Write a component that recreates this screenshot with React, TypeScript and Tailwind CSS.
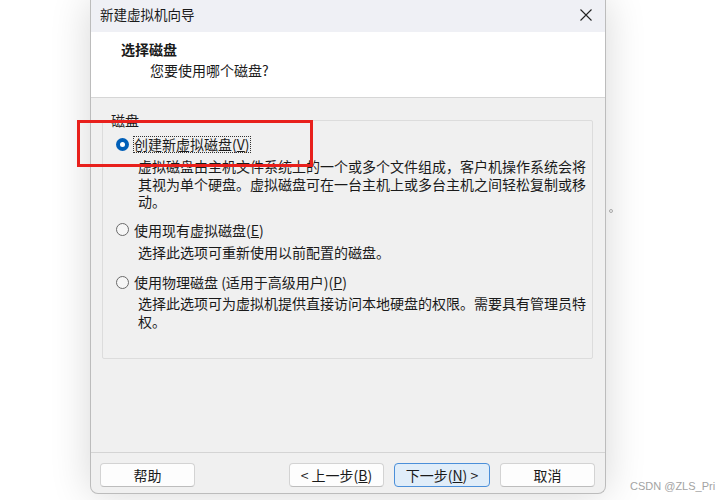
import React from 'react';

function Radio({ checked }: { checked?: boolean }) {
  if (checked) {
    return (
      <span className="w-[13px] h-[13px] rounded-full bg-[#005fb8] flex items-center justify-center shrink-0">
        <span className="w-[5px] h-[5px] rounded-full bg-white" />
      </span>
    );
  }
  return <span className="w-[13px] h-[13px] rounded-full border border-[#6a6a6a] bg-[#f6f6f6] shrink-0" />;
}

function Button({ children, primary }: { children: React.ReactNode; primary?: boolean }) {
  return (
    <button
      className={
        primary
          ? 'h-[24px] w-[96px] rounded-[4px] border border-[#4b8fd9] bg-[#e0edf9] text-[14px] leading-[22px] text-[#1a1a1a]'
          : 'h-[24px] w-[95px] rounded-[4px] border border-[#d3d3d3] border-b-[#bdbdbd] bg-[#fdfdfd] text-[14px] leading-[22px] text-[#1a1a1a]'
      }
    >
      {children}
    </button>
  );
}

export default function App() {
  return (
    <div className="relative w-[726px] h-[500px] overflow-hidden bg-white font-['Noto_Sans_CJK_SC','Liberation_Sans',sans-serif] text-[#1a1a1a]">
      {/* dialog window */}
      <div className="ml-[90px] w-[516px] h-[494px] flex flex-col overflow-hidden rounded-b-[8px] border border-t-0 border-[#bcbcbc] bg-[#f0f0f0] shadow-[0_0_40px_rgba(0,0,0,0.16)]">
        {/* title bar */}
        <div className="h-[32px] shrink-0 flex items-start justify-between bg-[#eff0f5] pl-[9px] pr-[13px] pt-[5px]">
          <span className="text-[13.5px] leading-[18px]">新建虚拟机向导</span>
          <svg width="12" height="12" viewBox="0 0 12 12" className="mt-[4px]">
            <path d="M0.5 0.5 L11.5 11.5 M11.5 0.5 L0.5 11.5" stroke="#222" strokeWidth="1.1" fill="none" />
          </svg>
        </div>

        {/* header */}
        <div className="h-[66px] shrink-0 bg-white border-b border-[#d6d6d6] pl-[30px] pt-[8px]">
          <div className="text-[14px] leading-[18px] font-bold">选择磁盘</div>
          <div className="mt-[3px] pl-[29px] text-[14px] leading-[18px]">您要使用哪个磁盘?</div>
        </div>

        {/* body */}
        <div className="flex-1 pl-[11px] pr-[12px] pt-[13px]">
          <fieldset className="h-[248px] border border-[#dcdcdc] rounded-[2px]">
            <legend className="ml-[7px] px-[1px] text-[14px] leading-[18px]">磁盘</legend>
            <div className="pl-[13px] pt-[6px] text-[14px]">
              <div className="flex items-center h-[18px]">
                <Radio checked />
                <span className="ml-[4px] border border-dotted border-[#333] leading-[15px]">
                  创建新虚拟磁盘(<span className="underline">V</span>)
                </span>
              </div>
              <div className="mt-[5px] pl-[22px] leading-[17.5px] whitespace-nowrap">
                虚拟磁盘由主机文件系统上的一个或多个文件组成，客户机操作系统会将
                <br />
                其视为单个硬盘。虚拟磁盘可在一台主机上或多台主机之间轻松复制或移
                <br />
                动。
              </div>

              <div className="mt-[10px] flex items-center h-[18px]">
                <Radio />
                <span className="ml-[5px] leading-[18px]">
                  使用现有虚拟磁盘(<span className="underline">E</span>)
                </span>
              </div>
              <div className="mt-[5px] pl-[22px] leading-[17.5px] whitespace-nowrap">
                选择此选项可重新使用以前配置的磁盘。
              </div>

              <div className="mt-[12px] flex items-center h-[18px]">
                <Radio />
                <span className="ml-[5px] leading-[18px]">
                  使用物理磁盘 (适用于高级用户)(<span className="underline">P</span>)
                </span>
              </div>
              <div className="mt-[4px] pl-[22px] leading-[17.5px] whitespace-nowrap">
                选择此选项可为虚拟机提供直接访问本地硬盘的权限。需要具有管理员特
                <br />
                权。
              </div>
            </div>
          </fieldset>
        </div>

        {/* footer */}
        <div className="h-[41px] shrink-0 border-t border-[#d4d4d4] flex items-start justify-between pl-[9px] pr-[10px] pt-[10px]">
          <Button>帮助</Button>
          <div className="flex gap-[10px]">
            <Button>
              &lt; 上一步(<span className="underline">B</span>)
            </Button>
            <Button primary>
              下一步(<span className="underline">N</span>) &gt;
            </Button>
            <Button>取消</Button>
          </div>
        </div>
      </div>

      {/* red highlight annotation */}
      <div className="absolute left-[77px] top-[120px] w-[236px] h-[47px] border-[3px] border-[#e8201c]" />

      {/* stray dot */}
      <span className="absolute left-[609px] top-[209px] w-[4px] h-[4px] rounded-full border border-[#a8a8a8]" />

      {/* watermark */}
      <span className="absolute left-[630px] top-[479px] font-['Liberation_Sans',sans-serif] text-[11px] leading-[14px] text-[#a3a3a3]">
        CSDN @ZLS_Pri
      </span>
    </div>
  );
}
